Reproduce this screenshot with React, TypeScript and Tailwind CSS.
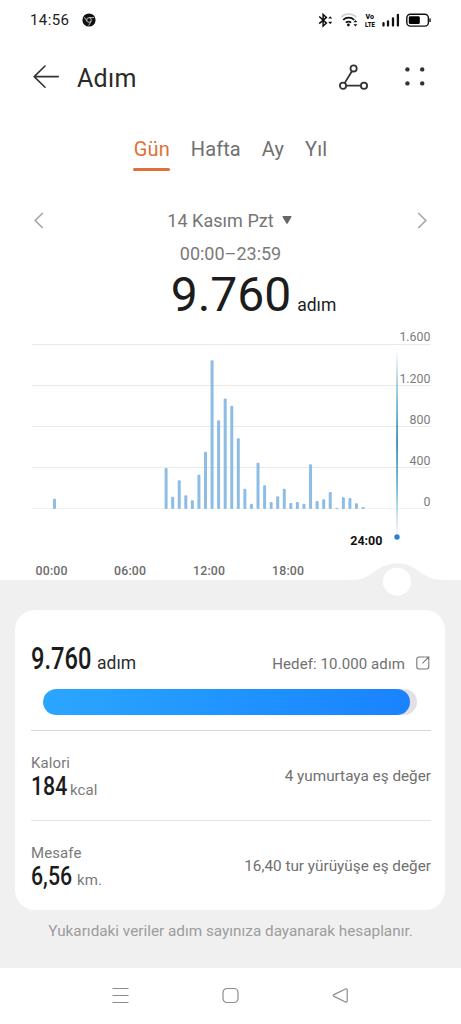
const TABS = ["Gün", "Hafta", "Ay", "Yıl"];

// Steps per half hour, starting at 00:00
const STEPS = [
  99, 0, 0, 0, 0, 0, 0, 0, 0, 0, 0, 0, 0, 0, 0, 0, 0, 399, 117, 279, 133, 85,
  333, 555, 1447, 863, 1073, 1003, 688, 197, 51, 448, 231, 68, 124, 195, 58, 68,
  49, 435, 78, 94, 165, 10, 114, 107, 55, 17,
];

const Y_TICKS = ["1.600", "1.200", "800", "400", "0"];

const X_TICKS = [
  { label: "00:00", x: 35.5 },
  { label: "06:00", x: 114 },
  { label: "12:00", x: 193 },
  { label: "18:00", x: 272 },
];

function StatusBar() {
  return (
    <div className="flex h-10 items-center pr-[29px] pl-[30px]">
      <span className="w-[40px] text-[15px] leading-none tracking-[0.4px] whitespace-nowrap text-[#222]">
        14:56
      </span>
      <svg className="ml-3 h-[14px] w-[14px]" viewBox="0 0 14 14" fill="none">
        <circle cx="7" cy="7" r="6.6" fill="#111" />
        <circle cx="7" cy="7" r="2.3" stroke="#ccc" strokeWidth="0.9" />
        <path
          d="M7 4.6h5M4.9 8.2 2.4 4.2M9.1 8.2l-2.4 4.3"
          stroke="#ccc"
          strokeWidth="0.9"
        />
      </svg>
      <svg
        className="ml-auto h-4 w-[114px]"
        viewBox="0 0 114 16"
        fill="none"
        stroke="#111"
      >
        {/* Bluetooth */}
        <path d="m1.2 4.5 7.2 6.6-3.3 3V2.4l3.3 3L1.2 11.6" strokeWidth="1.5" />
        <path
          d="m10.2 6.6 2-2.4 2 2.4zM10.2 9.8l2 2.4 2-2.4z"
          fill="#111"
          stroke="none"
        />
        {/* Wifi */}
        <path d="M23.2 5a11 11 0 0 1 15 0" stroke="#ccc" strokeWidth="1.5" />
        <path
          d="M25.2 7.8a8 8 0 0 1 11 0M27.8 10.6a4.6 4.6 0 0 1 5.4 0"
          strokeWidth="1.7"
        />
        <circle cx="30.4" cy="13" r="1.4" fill="#111" stroke="none" />
        <path
          d="m35.4 10.3 2-2.3 2 2.3zM35.4 12.3l2 2.3 2-2.3z"
          fill="#111"
          stroke="none"
        />
        {/* VoLTE */}
        <g
          fill="#111"
          stroke="none"
          fontFamily="Roboto, sans-serif"
          fontWeight="900"
          fontSize="7"
        >
          <text x="47.6" y="6.8" textLength="8.5" lengthAdjust="spacingAndGlyphs">
            Vo
          </text>
          <text x="47" y="15" textLength="9.8" lengthAdjust="spacingAndGlyphs">
            LTE
          </text>
        </g>
        {/* Signal */}
        <path
          d="M65.5 11.2v2.4M70 9.5v4.1M75 6.3v7.3M79.9 2.8v10.8"
          strokeWidth="2.3"
          strokeLinecap="round"
        />
        {/* Battery */}
        <rect x="88.8" y="2.3" width="21.6" height="11.8" rx="3.6" strokeWidth="1.4" />
        <rect x="90.8" y="4.3" width="11" height="7.8" rx="1.4" fill="#000" stroke="none" />
        <path d="M112 6.6v3.4" strokeWidth="1.4" />
      </svg>
    </div>
  );
}

function Header() {
  return (
    <header className="flex h-[74px] items-center pr-[36px] pl-[33px]">
      <svg
        className="h-6 w-[27px]"
        viewBox="0 0 27 24"
        fill="none"
        stroke="#333"
        strokeWidth="1.6"
        strokeLinecap="round"
        strokeLinejoin="round"
      >
        <path d="M12 1 1.2 11.6 12 22.2M1.5 11.6h23.8" />
      </svg>
      <h1 className="ml-[17px] pt-[2px] text-[25px] leading-none tracking-[0.3px] text-[#2a2a2a]">
        Adım
      </h1>
      <svg
        className="ml-auto h-[27px] w-[30px]"
        viewBox="0 0 30 27"
        fill="none"
        stroke="#333"
        strokeWidth="1.8"
      >
        <circle cx="14.6" cy="4.4" r="3.1" />
        <circle cx="4" cy="21.7" r="3.1" />
        <circle cx="25" cy="21.7" r="3.1" />
        <path d="M12.9 7.2 5.8 18.9M7.2 21.7h14.7" />
      </svg>
      <svg className="ml-[36px] h-5 w-5" viewBox="0 0 20 20" fill="#333">
        <circle cx="2.4" cy="2.4" r="2.2" />
        <circle cx="17.2" cy="2.4" r="2.2" />
        <circle cx="2.4" cy="16.4" r="2.2" />
        <circle cx="17.2" cy="16.4" r="2.2" />
      </svg>
    </header>
  );
}

function Chevron({ d }: { d: string }) {
  return (
    <svg
      className="h-[18px] w-[12px]"
      viewBox="0 0 12 18"
      fill="none"
      stroke="#a8a8a8"
      strokeWidth="1.7"
    >
      <path d={d} />
    </svg>
  );
}

function StepsChart() {
  return (
    <svg
      className="block h-[285px] w-full"
      viewBox="0 325 461 285"
      fontFamily="Roboto, sans-serif"
    >
      <defs>
        <linearGradient id="cursor" x1="0" y1="0" x2="0" y2="1">
          <stop offset="0" stopColor="#4f9fc4" stopOpacity="0" />
          <stop offset="0.25" stopColor="#5aa9cc" stopOpacity="0.7" />
          <stop offset="0.5" stopColor="#3f92b4" />
          <stop offset="0.75" stopColor="#5aa9cc" stopOpacity="0.8" />
          <stop offset="1" stopColor="#7fb9dc" stopOpacity="0.1" />
        </linearGradient>
      </defs>

      {Y_TICKS.map((label, i) => (
        <g key={label}>
          <rect
            x="32"
            y={344 + Math.round(i * 41.1)}
            width="399"
            height="1"
            fill={i === 4 ? "#f1f1f1" : "#e9e9e9"}
          />
          <text
            x="430.5"
            y={341.4 + i * 41.1}
            textAnchor="end"
            fontSize="12.4"
            fill="#7c7c7c"
          >
            {label}
          </text>
        </g>
      ))}

      {STEPS.map((steps, i) => {
        const height = steps * 0.1028;
        return steps > 0 ? (
          <rect
            key={i}
            x={53 + i * 6.565}
            y={508.9 - height}
            width="3"
            height={height}
            rx={height > 3 ? 1 : 0}
            fill="#8dbde5"
          />
        ) : null;
      })}

      {/* Time cursor */}
      <rect x="396.1" y="350" width="1.9" height="184" fill="url(#cursor)" />
      <circle cx="397" cy="537" r="2.7" fill="#2a80d8" />
      <text
        x="350.3"
        y="545.3"
        fontSize="12.5"
        fontWeight="700"
        fill="#111"
        textLength="32"
      >
        24:00
      </text>

      {X_TICKS.map((tick) => (
        <text
          key={tick.label}
          x={tick.x}
          y="574.5"
          fontSize="12.3"
          fontWeight="500"
          fill="#6c6c6c"
          textLength="32"
        >
          {tick.label}
        </text>
      ))}

      {/* Slider track with the bump around its handle */}
      <path
        d="M0 580h350c12 0 17-3 24-8 8-6 14-8.5 23-8.5s15 2.5 23 8.5c7 5 12 8 24 8h17v30H0z"
        fill="#f0f0f0"
      />
      <circle cx="397" cy="581.7" r="14" fill="#fff" />
    </svg>
  );
}

function Metric({
  label,
  value,
  unit,
  note,
  valueClass,
}: {
  label: string;
  value: string;
  unit: string;
  note: string;
  valueClass: string;
}) {
  return (
    <div className="flex h-[89px] items-center justify-between">
      <div className="pt-[6px]">
        <div className="text-[15px] leading-[18px] tracking-[0.1px] text-[#7a7a7a]">
          {label}
        </div>
        <div className="flex items-baseline leading-[28px]">
          <span className={valueClass}>
            <span className="inline-block origin-left scale-x-[0.82] text-[26px] font-medium text-[#1c1c1c]">
              {value}
            </span>
          </span>
          <span className="text-[15px] tracking-[0.1px] text-[#7a7a7a]">
            {unit}
          </span>
        </div>
      </div>
      <div className="pt-[2px] text-[15.3px] text-[#707070]">{note}</div>
    </div>
  );
}

function SummaryCard() {
  return (
    <section className="mr-4 ml-[15px] h-[300px] rounded-[20px] bg-white pr-[14px] pl-4">
      <div className="flex h-[79px] items-baseline pt-[31px] leading-[34px]">
        <span className="w-[66px]">
          <span className="inline-block origin-left scale-x-[0.74] text-[32px] font-medium text-[#1c1c1c]">
            9.760
          </span>
        </span>
        <span className="text-[17.5px] text-[#2c2c2c]">adım</span>
        <span className="ml-auto text-[15px] tracking-[0.1px] text-[#707070]">
          Hedef: 10.000 adım
        </span>
        <svg
          className="mt-[15px] mr-px ml-[11px] h-[14px] w-[14px] self-start"
          viewBox="0 0 14 14"
          fill="none"
          stroke="#777"
          strokeWidth="1.1"
        >
          <path d="M8.8 1H3A2.2 2.2 0 0 0 .8 3.2v7.6A2.2 2.2 0 0 0 3 13h7.6a2.2 2.2 0 0 0 2.2-2.2V5.2M6.4 7.4l6.2-6.2M9 1h3.8v4" />
        </svg>
      </div>
      <div className="mr-[14px] ml-[12px] h-[26px] overflow-hidden rounded-full bg-[#e2dfe6]">
        <div
          className="h-full rounded-full bg-linear-to-r from-[#2ba6ff] to-[#1a82ff]"
          style={{ width: `${(9760 / 10000) * 100 + 0.6}%` }}
        />
      </div>
      <div className="mt-[15px] border-t border-[#d6d6d6]">
        <Metric
          label="Kalori"
          value="184"
          unit="kcal"
          note="4 yumurtaya eş değer"
          valueClass="w-[39px]"
        />
      </div>
      <div className="border-t border-[#e4e4e4]">
        <Metric
          label="Mesafe"
          value="6,56"
          unit="km."
          note="16,40 tur yürüyüşe eş değer"
          valueClass="w-[46px]"
        />
      </div>
    </section>
  );
}

function NavBar() {
  return (
    <nav className="flex h-[56px] items-center justify-between bg-white px-[111px] pb-[2px]">
      {[
        "M1.5 1.5h16M1.5 8.5h16M1.5 15.5h16",
        "M6 1.5h7a4 4 0 0 1 4 4v6a4 4 0 0 1-4 4H6a4 4 0 0 1-4-4v-6a4 4 0 0 1 4-4z",
        "M14.5 2 3 7.6q-1.6.9 0 1.8L14.5 15q1.7.7 1.7-1.2V3.2q0-1.9-1.7-1.2z",
      ].map((d) => (
        <svg
          key={d}
          className="h-[17px] w-[19px]"
          viewBox="0 0 19 17"
          fill="none"
          stroke="#8c8c8c"
          strokeWidth="1.2"
        >
          <path d={d} />
        </svg>
      ))}
    </nav>
  );
}

export default function App() {
  return (
    <div className="flex h-[1024px] w-[461px] flex-col overflow-hidden bg-white font-[Roboto,sans-serif]">
      <StatusBar />
      <Header />

      <div className="flex h-[76px] justify-center gap-[21px] pt-[22px] text-[20px] leading-[26px] tracking-[0.1px] text-[#707070]">
        {TABS.map((tab, i) => (
          <span
            key={tab}
            className={i === 0 ? "relative text-[#e0703a]" : ""}
          >
            {tab}
            {i === 0 && (
              <span className="absolute top-[32px] right-0 -left-px h-[2.5px] rounded-full bg-[#e0703a]" />
            )}
          </span>
        ))}
      </div>

      <div className="flex h-[62px] items-center justify-between px-[33px]">
        <Chevron d="M9.8 1 2.2 8.5 9.8 16" />
        <div className="flex items-center gap-[8px] pr-[2px] pb-[2px] text-[18px] tracking-[0.05px] text-[#757575]">
          14 Kasım Pzt
          <svg className="mb-px h-2 w-[10px]" viewBox="0 0 10 8" fill="#666">
            <path d="M1.2 0h7.6Q10 .1 9.3 1.2L5.8 7.2Q5 8.2 4.2 7.2L.7 1.2Q0 .1 1.2 0z" />
          </svg>
        </div>
        <Chevron d="M2.2 1l7.6 7.5L2.2 16" />
      </div>

      <div className="-mt-[9px] flex h-[82px] flex-col items-center">
        <div className="text-[18px] leading-[22px] text-[#7a7a7a]">
          00:00–23:59
        </div>
        <div className="flex items-baseline pt-px pl-[46px] leading-[58px] text-[#1c1c1c]">
          <span className="text-[48px]">9.760</span>
          <span className="ml-[6px] text-[17.5px]">adım</span>
        </div>
      </div>

      <StepsChart />

      <main className="h-[358px] bg-[#f0f0f0]">
        <SummaryCard />
        <p className="pt-[11px] text-center text-[15.3px] leading-[20px] text-[#9c9c9c]">
          Yukarıdaki veriler adım sayınıza dayanarak hesaplanır.
        </p>
      </main>
      <NavBar />
    </div>
  );
}
